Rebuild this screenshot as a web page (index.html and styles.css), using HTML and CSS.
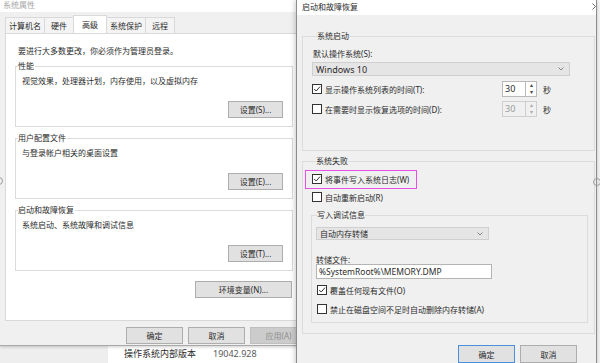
FILE: index.html
```html
<!DOCTYPE html>
<html lang="zh-CN">
<head>
<meta charset="utf-8">
<title>系统属性</title>
<link rel="stylesheet" href="styles.css">
</head>
<body>
<div class="desktop">

  <div class="bgwin">
    <div class="bg-nav"></div>
    <div class="bg-main"><span class="bg-key">操作系统内部版本</span><span class="bg-val">19042.928</span></div>
  </div>

  <div class="win win-left">
    <div class="titlebar inactive">系统属性</div>
    <div class="tabs">
      <div class="tab wide">计算机名</div>
      <div class="tab">硬件</div>
      <div class="tab selected">高级</div>
      <div class="tab wide">系统保护</div>
      <div class="tab">远程</div>
    </div>
    <div class="panel">
      <p class="notice">要进行大多数更改，你必须作为管理员登录。</p>
      <fieldset class="group lgroup first">
        <legend>性能</legend>
        <p class="desc">视觉效果，处理器计划，内存使用，以及虚拟内存</p>
        <div class="btnrow"><button class="btn">设置(S)...</button></div>
      </fieldset>
      <fieldset class="group lgroup">
        <legend>用户配置文件</legend>
        <p class="desc">与登录帐户相关的桌面设置</p>
        <div class="btnrow"><button class="btn">设置(E)...</button></div>
      </fieldset>
      <fieldset class="group lgroup">
        <legend>启动和故障恢复</legend>
        <p class="desc">系统启动、系统故障和调试信息</p>
        <div class="btnrow"><button class="btn">设置(T)...</button></div>
      </fieldset>
      <div class="envrow"><button class="btn env">环境变量(N)...</button></div>
    </div>
    <div class="dlgbtns">
      <button class="btn dlg">确定</button>
      <button class="btn dlg">取消</button>
      <button class="btn dlg" disabled>应用(A)</button>
    </div>
  </div>

  <div class="win win-right">
    <div class="titlebar active">
      <span>启动和故障恢复</span>
      <svg class="close-peek" width="4" height="7" viewBox="0 0 4 7"><polyline points="0.5,0.5 3.5,3.5 0.5,6.5" fill="none" stroke="#666" stroke-width="1"/></svg>
    </div>
    <div class="rcontent">
      <fieldset class="group rgroup startup">
        <legend>系统启动</legend>
        <p class="rlabel">默认操作系统(S):</p>
        <div class="combo big"><span>Windows 10</span>
          <svg class="chev" width="6" height="4" viewBox="0 0 6 4"><polyline points="0.5,0.5 3,3 5.5,0.5" fill="none" stroke="#777" stroke-width="0.9"/></svg>
        </div>
        <div class="crow r1">
          <span class="cb checked"><svg width="8" height="8" viewBox="0 0 8 8"><polyline points="1.2,4 3.2,6 7,1.6" fill="none" stroke="#333" stroke-width="1"/></svg></span>
          <span class="clabel">显示操作系统列表的时间(T):</span>
          <span class="spin"><span class="spin-val">30</span><span class="spin-btns"><span class="up">▴</span><span class="dn">▾</span></span></span>
          <span class="unit">秒</span>
        </div>
        <div class="crow r2">
          <span class="cb"></span>
          <span class="clabel">在需要时显示恢复选项的时间(D):</span>
          <span class="spin disabled"><span class="spin-val">30</span><span class="spin-btns"><span class="up">▴</span><span class="dn">▾</span></span></span>
          <span class="unit">秒</span>
        </div>
      </fieldset>

      <fieldset class="group rgroup failure">
        <legend>系统失败</legend>
        <div class="crow w">
          <span class="cb checked"><svg width="8" height="8" viewBox="0 0 8 8"><polyline points="1.2,4 3.2,6 7,1.6" fill="none" stroke="#333" stroke-width="1"/></svg></span>
          <span>将事件写入系统日志(W)</span>
        </div>
        <div class="crow r">
          <span class="cb"></span>
          <span>自动重新启动(R)</span>
        </div>
        <fieldset class="group inner">
          <legend>写入调试信息</legend>
          <div class="combo small"><span>自动内存转储</span>
            <svg class="chev" width="6" height="4" viewBox="0 0 6 4"><polyline points="0.5,0.5 3,3 5.5,0.5" fill="none" stroke="#777" stroke-width="0.9"/></svg>
          </div>
          <p class="flabel">转储文件:</p>
          <div class="textbox">%SystemRoot%\MEMORY.DMP</div>
          <div class="crow o">
            <span class="cb checked"><svg width="8" height="8" viewBox="0 0 8 8"><polyline points="1.2,4 3.2,6 7,1.6" fill="none" stroke="#333" stroke-width="1"/></svg></span>
            <span>覆盖任何现有文件(O)</span>
          </div>
          <div class="crow a">
            <span class="cb"></span>
            <span>禁止在磁盘空间不足时自动删除内存转储(A)</span>
          </div>
        </fieldset>
      </fieldset>

      <div class="rbtns">
        <button class="btn dlg default">确定</button>
        <button class="btn dlg">取消</button>
      </div>
    </div>
  </div>

  <div class="highlight"></div>
  <div class="ring ring-left"></div>
  <div class="ring ring-right"></div>
</div>
</body>
</html>
```
FILE: styles.css
```css
* { box-sizing: border-box; }
html, body { margin: 0; padding: 0; }
body {
  width: 600px;
  height: 363px;
  overflow: hidden;
  background: #ffffff;
  font-family: "Noto Sans", "Noto Sans CJK SC", sans-serif;
  font-size: 8px;
  color: #2b2b2b;
}
p { margin: 0; }

.desktop { position: relative; width: 600px; height: 363px; overflow: hidden; }

/* background settings window */
.bgwin {
  position: absolute; left: 0; top: 346px;
  width: 300px; height: 17px;
  display: flex;
}
.bg-nav { width: 108px; background: #eeeeee; }
.bg-main {
  flex: 1; background: #fff;
  padding-left: 16px;
  font-size: 9px; line-height: 15px;
  display: flex;
}
.bg-key { width: 89px; color: #2b2b2b; }
.bg-val { color: #5a5a5a; }

/* windows */
.win { position: absolute; background: #f0f0f0; }
.win-left {
  left: 0; top: 0;
  width: 313px; height: 346px;
  border-bottom: 1px solid #a8a8a8;
  display: flex; flex-direction: column;
  box-shadow: 0 1px 3px rgba(0,0,0,0.2);
}
.titlebar { background: #fff; flex: none; }
.titlebar.inactive {
  height: 12px; line-height: 10px;
  padding-left: 3px;
  color: #a6a6a6;
}
.titlebar.active {
  height: 15px; line-height: 14px;
  padding-left: 5px;
  display: flex; justify-content: space-between; align-items: flex-start;
}
.close-peek { margin-top: 3px; }

.tabs {
  height: 21px; flex: none;
  display: flex; align-items: flex-end;
  padding-left: 5px;
}
.tab {
  height: 16px; line-height: 15px;
  padding: 0 6px;
  border: 1px solid #d9d9d9; border-bottom: 0;
  background: #f4f4f4;
  margin-right: -1px;
}
.tab.wide { padding: 0 3px; }
.tab.selected {
  height: 18px; line-height: 17px;
  padding: 0 8px;
  background: #fff;
  position: relative; z-index: 1;
}

.panel {
  flex: none;
  margin-left: 5px;
  width: 303px; height: 288px;
  background: #fff;
  border: 1px solid #d9d9d9;
  padding-left: 9px;
  display: flex; flex-direction: column;
}
.notice { line-height: 10px; margin: 12px 0 0 3px; }

.group {
  margin: 0; min-width: 0;
  border: 1px solid #dcdcdc;
}
.group legend { padding: 0; line-height: 10px; }

.lgroup {
  width: 278px;
  margin-top: 6px;
  padding: 5px 9px 8px 1px;
}
.lgroup.first { margin-top: 5px; }
.lgroup legend { margin-left: 1px; padding-right: 1px; }
.desc { line-height: 10px; padding-left: 5px; }
.btnrow { display: flex; justify-content: flex-end; margin-top: 15px; }

.btn {
  font: inherit; color: #2b2b2b;
  background: #e1e1e1;
  border: 1px solid #adadad;
  padding: 0; margin: 0;
  height: 17px; width: 55px;
  line-height: 15px;
  text-align: center;
}
.btn:disabled { background: #cccccc; border-color: #bfbfbf; color: #8d8d8d; }
.envrow { width: 278px; display: flex; justify-content: flex-end; padding-right: 1px; margin-top: 10px; }
.btn.env { width: 97px; }

.dlgbtns {
  display: flex; justify-content: flex-end; gap: 5px;
  padding-right: 6px; margin-top: 6px;
}
.btn.dlg { width: 57px; }

/* right window */
.win-right {
  left: 296px; top: 0;
  width: 301px; height: 380px;
  border-left: 1px solid #8c8c8c;
  border-right: 1px solid #8c8c8c;
  box-shadow: 0 0 6px rgba(0,0,0,0.28);
  display: flex; flex-direction: column;
  z-index: 2;
}
.rcontent { padding-left: 5px; display: flex; flex-direction: column; }

.rgroup { width: 293px; }
.rgroup > legend { margin-left: 5px; }
.startup { margin-top: 16px; padding: 8px 0 33px 9px; }
.rlabel { line-height: 10px; margin-left: 1px; }

.combo {
  display: flex; align-items: center; justify-content: space-between;
  background: #e5e5e5;
  border: 1px solid #cfcfcf;
  padding: 0 5px 0 3px;
}
.combo.big { width: 258px; height: 14px; margin-top: 3px; font-size: 9px; }
.combo.small { width: 173px; height: 13px; margin-top: 7px; }

.crow { display: flex; align-items: center; height: 16px; }
.cb {
  width: 10px; height: 10px; flex: none;
  border: 1px solid #333;
  background: #fff;
  margin-right: 3px;
  display: flex; align-items: center; justify-content: center;
}
.cb svg { display: block; }
.r1 { margin-top: 5px; }
.r2 { margin-top: 4px; }
.clabel { width: 177px; }
.spin { display: flex; height: 16px; }
.spin-val {
  width: 23px; background: #fff;
  border: 1px solid #b9b9b9; border-right: 0;
  font-size: 9px; line-height: 14px; padding-left: 2px;
}
.spin-btns {
  width: 12px; display: flex; flex-direction: column;
  border: 1px solid #b9b9b9; background: #fff;
}
.spin-btns span {
  flex: 1; text-align: center;
  font-size: 6px; line-height: 7px; color: #444;
}
.spin.disabled .spin-val { background: #f0f0f0; color: #9a9a9a; border-color: #cfcfcf; }
.spin.disabled .spin-btns { background: #f0f0f0; border-color: #cfcfcf; }
.spin.disabled .spin-btns span { color: #aaa; }
.unit { margin-left: 6px; }

.failure { margin-top: 5px; padding: 0 0 10px 8px; }
.failure > .crow { padding-left: 1px; }
.crow.w { margin-top: 5px; }
.crow.r { margin-top: 2px; }

.inner { width: 277px; margin-top: 5px; padding: 0 0 5px 4px; }
.inner legend { margin-left: 1px; }
.flabel { line-height: 8px; margin-top: 16px; }
.textbox {
  width: 176px; height: 15px;
  background: #fff; border: 1px solid #b4b4b4;
  line-height: 13px; padding-left: 2px;
  font-size: 8.5px;
}
.crow.o { margin-top: 3px; padding-left: 1px; }
.crow.a { margin-top: 3px; padding-left: 1px; }

.rbtns {
  display: flex; justify-content: flex-end; gap: 5px;
  padding-right: 19px; margin-top: 11px;
}
.rbtns .btn { height: 18px; }
.btn.default { border-color: #4a90dc; }

/* overlays */
.highlight {
  position: absolute; left: 305px; top: 170px;
  width: 112px; height: 19px;
  border: 1.5px solid #e650e6;
  z-index: 5;
}
.ring {
  position: absolute; width: 8px; height: 8px;
  border: 1.5px solid #9c9c9c; border-radius: 50%;
  z-index: 6;
}
.ring-left { left: -5px; top: 177px; }
.ring-right { left: 593px; top: 178px; }
```
